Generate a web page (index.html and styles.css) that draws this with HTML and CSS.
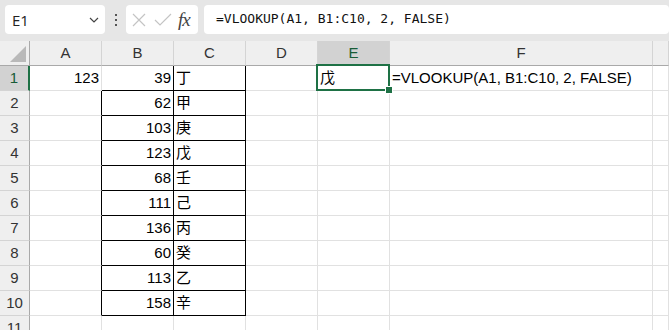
FILE: index.html
```html
<!DOCTYPE html>
<html lang="ja">
  <head>
    <meta charset="UTF-8" />
    <meta name="viewport" content="width=device-width, initial-scale=1.0" />
    <title>Book1 - Excel</title>
    <link rel="stylesheet" href="styles.css">
  </head>
  <body>
    <div class="formula-bar">
      <div class="name-box">
        <span>E1</span>
        <svg class="chevron" width="10" height="6" viewBox="0 0 10 6">
          <path d="M1 1 L5 5 L9 1" fill="none" stroke="#444" stroke-width="1.2" />
        </svg>
      </div>
      <svg class="dots" width="4" height="12" viewBox="0 0 4 12">
        <rect x="1" y="0" width="2" height="2" fill="#555" />
        <rect x="1" y="5" width="2" height="2" fill="#555" />
        <rect x="1" y="10" width="2" height="2" fill="#555" />
      </svg>
      <div class="fx-box">
        <svg width="14" height="14" viewBox="0 0 14 14">
          <path d="M1 1 L13 13 M13 1 L1 13" stroke="#c4c4c4" stroke-width="1.2" />
        </svg>
        <svg width="18" height="14" viewBox="0 0 18 14">
          <path d="M1 7 L6 12 L17 1" fill="none" stroke="#c4c4c4" stroke-width="1.2" />
        </svg>
        <span class="fx">fx</span>
      </div>
      <div class="formula-input">=VLOOKUP(A1, B1:C10, 2, FALSE)</div>
    </div>

    <div class="sheet">
      <div class="row head-row">
        <div class="corner"><span class="tri"></span></div>
        <div class="col-head">A</div>
        <div class="col-head">B</div>
        <div class="col-head">C</div>
        <div class="col-head">D</div>
        <div class="col-head selected">E</div>
        <div class="col-head">F</div>
        <div class="col-head"></div>
      </div>
      <div id="sheet-body"></div>
    </div>

    <script>
      let nums = [39, 62, 103, 123, 68, 111, 136, 60, 113, 158];
      let names = ["丁", "甲", "庚", "戊", "壬", "己", "丙", "癸", "乙", "辛"];

      function renderSheet() {
        let text = "";
        for (let i = 0; i < 11; i++) {
          let inTable = i < 10;
          let first = i == 0;
          text += `
            <div class="row">
              <div class="row-head ${first ? "selected" : ""}">${i + 1}</div>
              <div class="cell num ${inTable && !first ? "edge" : ""}">${first ? 123 : ""}</div>
              <div class="cell num ${inTable ? "boxed" : ""}">${inTable ? nums[i] : ""}</div>
              <div class="cell ${inTable ? "boxed" : ""}">${inTable ? names[i] : ""}</div>
              <div class="cell"></div>
              <div class="cell ${first ? "active" : ""}">${first ? "戊" : ""}</div>
              <div class="cell">${first ? "=VLOOKUP(A1, B1:C10, 2, FALSE)" : ""}</div>
              <div class="cell"></div>
            </div>
          `;
        }
        document.getElementById("sheet-body").innerHTML = text;
      }
      renderSheet();
    </script>
  </body>
</html>
```

FILE: styles.css
```css
* {
  box-sizing: border-box;
}

body {
  margin: 0;
  background-color: #fff;
  font-family: "Liberation Sans", "Noto Sans CJK JP", sans-serif;
  overflow: hidden;
}

.formula-bar {
  display: flex;
  align-items: flex-start;
  height: 41px;
  padding: 5px 0 0 5px;
  background-color: #e6e6e6;
}

.name-box {
  display: flex;
  align-items: center;
  justify-content: space-between;
  width: 100px;
  height: 29px;
  padding: 0 6px 0 7px;
  background-color: #fff;
  border-radius: 4px;
  font-family: "Open Sans", "Liberation Sans", sans-serif;
  font-size: 15px;
  color: #222;
}

.dots {
  margin: 9px 8px 0 9px;
}

.fx-box {
  display: flex;
  align-items: center;
  width: 72px;
  height: 29px;
  padding: 0 0 0 6px;
  gap: 8px;
  background-color: #fff;
  border-radius: 4px;
}

.fx-box .fx {
  font-family: "Liberation Serif", serif;
  font-style: italic;
  font-size: 19px;
  color: #444;
  margin-left: -2px;
  letter-spacing: -1px;
}

.formula-input {
  flex: 1;
  height: 29px;
  margin-left: 6px;
  padding: 0 12px;
  line-height: 28px;
  background-color: #fff;
  border-radius: 4px;
  font-family: "DejaVu Sans Mono", monospace;
  font-size: 13px;
  color: #111;
}

.row {
  display: grid;
  grid-template-columns: 30px 72px 72px 72px 72px 72px 263px 1fr;
  height: 25px;
}

.head-row {
  background-color: #efefef;
}

.corner,
.col-head {
  border-right: 1px solid #d4d4d4;
  border-bottom: 1px solid #a9a9a9;
  text-align: center;
  line-height: 24px;
  font-size: 15px;
  color: #333;
}

.corner {
  position: relative;
  border-right-color: #a9a9a9;
}

.corner .tri {
  position: absolute;
  right: 3px;
  bottom: 3px;
  width: 0;
  height: 0;
  border-left: 16px solid transparent;
  border-bottom: 16px solid #b9b9b9;
}

.row-head {
  background-color: #efefef;
  border-right: 1px solid #a9a9a9;
  border-bottom: 1px solid #d4d4d4;
  text-align: center;
  line-height: 24px;
  font-size: 15px;
  color: #333;
}

.col-head.selected,
.row-head.selected {
  background-color: #d2d2d2;
  color: #185c37;
}

.row-head.selected {
  border-right: 2px solid #1e7145;
}

.cell {
  border-right: 1px solid #e1e1e1;
  border-bottom: 1px solid #e1e1e1;
  padding: 0 2px 0 2px;
  line-height: 24px;
  font-size: 15px;
  color: #000;
  white-space: nowrap;
}

.cell.num {
  text-align: right;
}

.cell.edge {
  border-right-color: #000;
}

.cell.boxed {
  border-right-color: #000;
  border-bottom-color: #000;
}

.cell.active {
  position: relative;
}

.cell.active::before {
  content: "";
  position: absolute;
  top: -2px;
  left: -2px;
  right: -1px;
  bottom: -1px;
  border: 2px solid #1e7145;
}

.cell.active::after {
  content: "";
  position: absolute;
  right: -4px;
  bottom: -4px;
  width: 6px;
  height: 6px;
  background-color: #1e7145;
  border: 1px solid #fff;
}
```
